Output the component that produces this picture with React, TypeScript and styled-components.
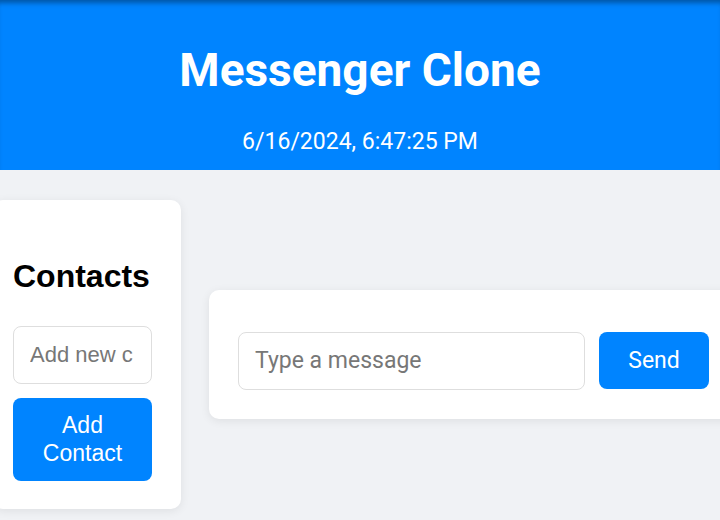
import React from "react";
import styled, { createGlobalStyle } from "styled-components";

const Global = createGlobalStyle`
  html, body { margin: 0; padding: 0; background: #f0f2f5; overflow: hidden; }
  body { font-family: Roboto, "Liberation Sans", Arial, sans-serif; width: 720px; height: 520px; }
  * { box-sizing: border-box; }
`;

const Page = styled.div`
  display: flex;
  flex-direction: column;
  width: 720px;
  height: 520px;
  overflow: hidden;
`;

const Header = styled.header`
  background: #0084ff;
  height: 170px;
  color: #fff;
  display: flex;
  flex-direction: column;
  align-items: center;
  box-shadow: inset 0 6px 5px -3px rgba(0, 0, 0, 0.35);
  flex-shrink: 0;
`;

const Title = styled.h1`
  margin: 43px 0 0;
  font-size: 46px;
  font-weight: 700;
  line-height: 54px;
`;

const DateText = styled.p`
  margin: 31px 0 0;
  font-size: 23px;
  line-height: 28px;
`;

const Main = styled.main`
  display: flex;
  align-items: center;
  gap: 28px;
  padding-top: 29px;
  height: 339px;
  align-self: flex-start;
  flex-shrink: 0;
`;

const Card = styled.section`
  background: #fff;
  border-radius: 10px;
  box-shadow: 0 2px 10px rgba(0, 0, 0, 0.08);
  flex-shrink: 0;
`;

const ContactsCard = styled(Card)`
  width: 188px;
  margin-left: -7px;
  padding: 28px 29px 28px 20px;
  display: flex;
  flex-direction: column;
  font-family: "Liberation Sans", Arial, sans-serif;
`;

const ContactsTitle = styled.h2`
  margin: 30px 0 31px;
  font-size: 32px;
  line-height: 37px;
  font-weight: 700;
  color: #000;
`;

const TextInput = styled.input<{ $w: number; $size: number }>`
  width: ${(p) => p.$w}px;
  height: 58px;
  border: 1px solid #dedede;
  border-radius: 8px;
  padding: 0 18px 0 16px;
  font-family: inherit;
  font-size: ${(p) => p.$size}px;
  color: #333;
  background: #fff;
  outline: none;
  &::placeholder { color: #777; }
`;

const BlueButton = styled.button<{ $w: number; $h: number }>`
  width: ${(p) => p.$w}px;
  height: ${(p) => p.$h}px;
  background: #0084ff;
  color: #fff;
  border: none;
  border-radius: 8px;
  font-family: inherit;
  font-size: 23px;
  line-height: 28px;
  padding: 0 10px;
  flex-shrink: 0;
`;

const ContactsForm = styled.div`
  display: flex;
  flex-direction: column;
  gap: 14px;
`;

const ChatCard = styled(Card)`
  width: 529px;
  padding: 42px 29px 29px;
`;

const InputRow = styled.div`
  display: flex;
  gap: 14px;
  align-items: center;
`;

export default function App() {
  return (
    <>
      <Global />
      <Page>
        <Header>
          <Title>Messenger Clone</Title>
          <DateText>6/16/2024, 6:47:25 PM</DateText>
        </Header>
        <Main>
          <ContactsCard>
            <ContactsTitle>Contacts</ContactsTitle>
            <ContactsForm>
              <TextInput $w={139} $size={22} placeholder="Add new contact" />
              <BlueButton $w={139} $h={83}>Add Contact</BlueButton>
            </ContactsForm>
          </ContactsCard>
          <ChatCard>
            <InputRow>
              <TextInput $w={347} $size={23} placeholder="Type a message" />
              <BlueButton $w={110} $h={57}>Send</BlueButton>
            </InputRow>
          </ChatCard>
        </Main>
      </Page>
    </>
  );
}
